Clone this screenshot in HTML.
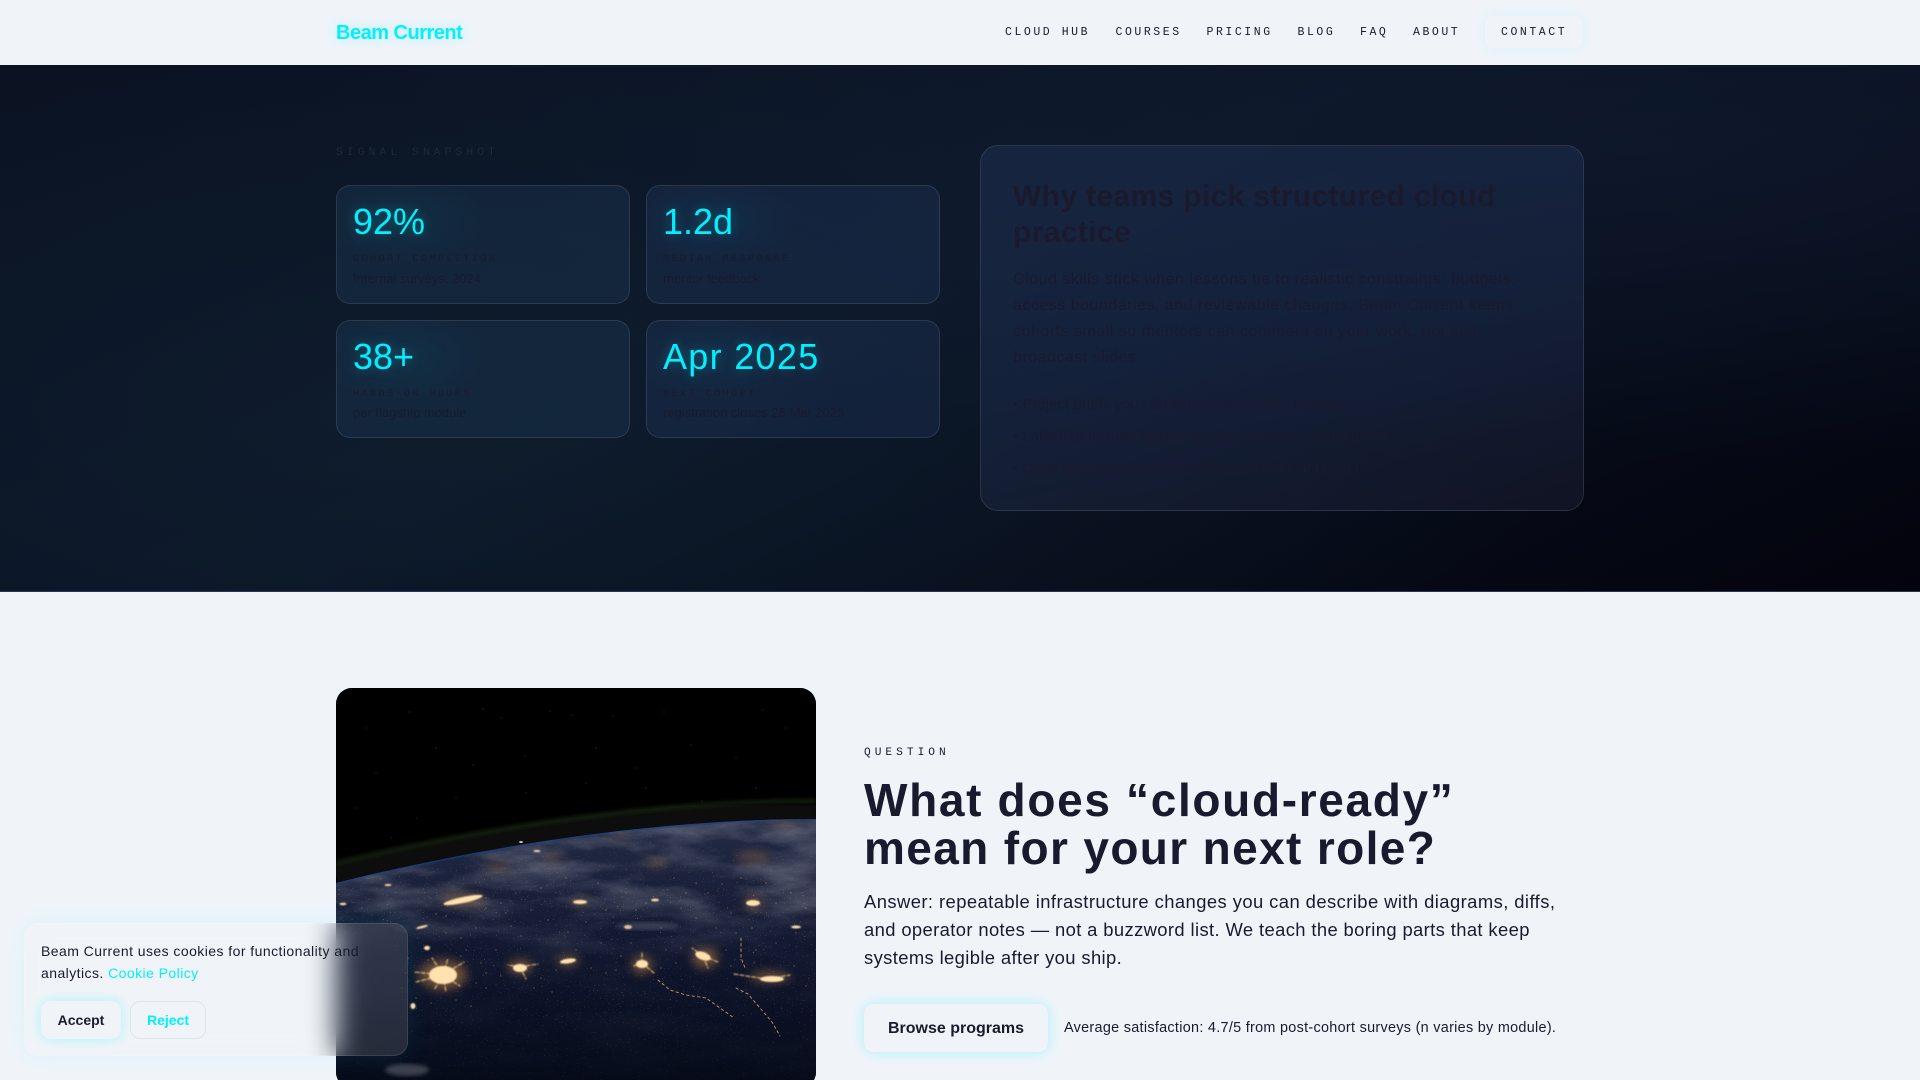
<!DOCTYPE html>
<html lang="en"><head><meta charset="utf-8"><title>Beam Current</title>
<style>
*{box-sizing:border-box;margin:0;padding:0}
html,body{width:1920px;height:1080px;overflow:hidden;background:#f0f4f9}
body{position:relative;font-family:"Liberation Sans",sans-serif;color:#1a1a2e}
.a{position:absolute;white-space:nowrap}
.m{font-family:"Liberation Mono",monospace}
nav{position:absolute;left:0;top:0;width:1920px;height:65px;background:#f0f4f9}
.logo{left:336px;top:20px;font-size:20px;line-height:26px;font-weight:700;color:#00f0ff;text-shadow:0 0 14px rgba(0,240,255,.3);letter-spacing:-.5px}
.nl{top:25px;font-size:11.5px;line-height:16px;letter-spacing:2.55px;color:#1a1a2e}
.ct{left:1485px;top:16px;width:98px;height:32px;border-radius:8px;background:#f0f4f9;box-shadow:0 0 14px rgba(0,240,255,.12)}
.hero{position:absolute;left:0;top:65px;width:1920px;height:527px;border-bottom:1px solid #2a3350;background:radial-gradient(ellipse 60% 90% at 22% 65%,rgba(17,36,52,.5),transparent),radial-gradient(ellipse 70% 60% at 85% 15%,rgba(18,30,52,.55),transparent),linear-gradient(155deg,#0a1020 0%,#0b1526 45%,#03030d 100%)}
.card{position:absolute;width:294px;border:1px solid rgba(255,255,255,.1);border-radius:14px;background:rgba(32,66,100,.3);overflow:hidden}
.card:after{content:"";position:absolute;left:-20px;top:-10px;width:170px;height:90px;background:radial-gradient(ellipse at center,rgba(0,200,240,.06),transparent 70%)}
.num{position:absolute;left:16px;top:14px;font-size:36px;line-height:44px;color:#00f0ff;text-shadow:0 0 12px rgba(0,240,255,.3);z-index:1;white-space:nowrap}
.lab{position:absolute;left:16px;top:66px;font-family:"Liberation Mono",monospace;font-size:10.4px;line-height:14px;letter-spacing:2.25px;color:#1a1a2e;z-index:1;white-space:nowrap}
.sub{position:absolute;left:16px;top:84px;font-size:13px;line-height:18px;color:#1a1a2e;z-index:1;white-space:nowrap}
.panel{position:absolute;left:980px;top:145px;width:604px;height:366px;border:1px solid rgba(255,255,255,.1);border-radius:18px;background:linear-gradient(170deg,rgba(32,48,84,.5),rgba(32,48,84,.44) 55%,rgba(38,40,62,.36))}
.pl{left:1013px;font-size:16px;line-height:26px;color:#1a1a2e;letter-spacing:.5px}
.li{left:1013px;font-size:14.4px;line-height:24px;color:#1a1a2e;letter-spacing:.27px}
.h2p{left:1013px;font-size:30px;line-height:36px;font-weight:700;color:#1a1a2e;letter-spacing:.35px}
.imgw{position:absolute;left:336px;top:688px;width:480px;height:400px;border-radius:16px;overflow:hidden;background:#000}
.cookie{position:absolute;left:24px;top:923px;width:384px;height:133px;border-radius:14px;border:1px solid rgba(255,255,255,.1);background:rgba(240,244,249,.13);-webkit-backdrop-filter:blur(14px);backdrop-filter:blur(14px);box-shadow:0 0 26px rgba(0,240,255,.1)}
.ck{left:41px;font-size:14px;line-height:22px;color:#1a1a2e;letter-spacing:.44px}
.btn{position:absolute;text-align:center;border-radius:10px}
</style></head><body>

<nav>
<div class="a logo">Beam Current</div>
<div class="a m nl" style="left:1005px">CLOUD HUB</div>
<div class="a m nl" style="left:1115.5px">COURSES</div>
<div class="a m nl" style="left:1206.5px">PRICING</div>
<div class="a m nl" style="left:1297.5px">BLOG</div>
<div class="a m nl" style="left:1360px">FAQ</div>
<div class="a m nl" style="left:1413px">ABOUT</div>
<div class="a ct"></div>
<div class="a m nl" style="left:1501px">CONTACT</div>
</nav>

<section class="hero"></section>
<div class="a m" style="left:336px;top:146px;font-size:11.2px;line-height:15px;letter-spacing:4.15px;color:#1b2a3a">SIGNAL SNAPSHOT</div>

<div class="card" style="left:336px;top:185px;height:119px"><div class="num">92%</div><div class="lab">COHORT COMPLETION</div><div class="sub">Internal surveys, 2024</div></div>
<div class="card" style="left:646px;top:185px;height:119px;background:rgba(34,56,96,.34)"><div class="num">1.2d</div><div class="lab">MEDIAN RESPONSE</div><div class="sub">mentor feedback</div></div>
<div class="card" style="left:336px;top:320px;height:118px"><div class="num">38+</div><div class="lab">HANDS-ON HOURS</div><div class="sub" style="top:83px">per flagship module</div></div>
<div class="card" style="left:646px;top:320px;height:118px;background:rgba(34,56,96,.34)"><div class="num" style="letter-spacing:1.3px">Apr 2025</div><div class="lab">NEXT COHORT</div><div class="sub" style="top:83px">registration closes 28 Mar 2025</div></div>

<div class="panel"></div>
<div class="a h2p" style="top:179px">Why teams pick structured cloud</div>
<div class="a h2p" style="top:215px">practice</div>
<div class="a pl" style="top:267px">Cloud skills stick when lessons tie to realistic constraints: budgets,</div>
<div class="a pl" style="top:293px">access boundaries, and reviewable changes. Beam Current keeps</div>
<div class="a pl" style="top:319px">cohorts small so mentors can comment on your work, not just</div>
<div class="a pl" style="top:345px">broadcast slides.</div>
<div class="a li" style="top:393px">• Project briefs you can explain to a hiring manager</div>
<div class="a li" style="top:425px">• Labs that include failure injection, not only happy paths</div>
<div class="a li" style="top:457px">• Clear statements about what tuition does not cover</div>

<div class="imgw">
<svg width="480" height="400" viewBox="0 0 480 400" xmlns="http://www.w3.org/2000/svg">
<defs>
<clipPath id="e"><path d="M0 195C120 165 300 131 480 131V400H0Z"/></clipPath>
<linearGradient id="eg" x1="0" y1="130" x2="0" y2="400" gradientUnits="userSpaceOnUse"><stop offset="0" stop-color="#232c46"/><stop offset=".25" stop-color="#1a213a"/><stop offset=".55" stop-color="#0e152c"/><stop offset="1" stop-color="#060a18"/></linearGradient>
<linearGradient id="cm" x1="0" y1="130" x2="0" y2="400" gradientUnits="userSpaceOnUse"><stop offset="0" stop-color="#aaa"/><stop offset=".32" stop-color="#888"/><stop offset=".52" stop-color="#141414"/><stop offset="1" stop-color="#080808"/></linearGradient>
<linearGradient id="sm" x1="0" y1="130" x2="0" y2="400" gradientUnits="userSpaceOnUse"><stop offset="0" stop-color="#222"/><stop offset=".3" stop-color="#999"/><stop offset=".7" stop-color="#666"/><stop offset="1" stop-color="#181818"/></linearGradient>
<mask id="cmask"><rect width="480" height="400" fill="url(#cm)"/></mask>
<mask id="smask"><rect width="480" height="400" fill="url(#sm)"/></mask>
<filter id="cl" x="0" y="0" width="100%" height="100%"><feTurbulence type="fractalNoise" baseFrequency=".012 .04" numOctaves="5" seed="7"/><feColorMatrix values="0 0 0 0 .44 0 0 0 0 .44 0 0 0 0 .5 1.9 0 0 0 -.72"/></filter>
<filter id="sp" x="0" y="0" width="100%" height="100%"><feTurbulence type="fractalNoise" baseFrequency=".7" numOctaves="2" seed="11"/><feColorMatrix values="0 0 0 0 1 0 0 0 0 .66 0 0 0 0 .3 14 0 0 0 -10.3"/></filter>
<filter id="b2"><feGaussianBlur stdDeviation="2"/></filter>
<filter id="b5"><feGaussianBlur stdDeviation="5"/></filter>
<filter id="b1"><feGaussianBlur stdDeviation=".9"/></filter>
</defs>
<rect width="480" height="400" fill="#000"/>
<path d="M0 188C120 158 300 124 480 124" fill="none" stroke="#0c1108" stroke-width="24" filter="url(#b2)"/>
<path d="M0 175C120 146 300 113 480 113" fill="none" stroke="#18240e" stroke-width="4" filter="url(#b2)"/>
<g clip-path="url(#e)">
<rect width="480" height="400" fill="url(#eg)"/>
<g mask="url(#cmask)"><rect width="480" height="400" filter="url(#cl)" opacity=".75"/></g>
<g mask="url(#smask)"><rect y="130" width="480" height="270" filter="url(#sp)" opacity=".7"/></g>
<path d="M0 195C120 165 300 131 480 131" fill="none" stroke="#173f8c" stroke-width="2.5" filter="url(#b1)" opacity=".8"/>
<g fill="#ffa850" filter="url(#b5)" opacity=".4">
<ellipse cx="107" cy="287" rx="24" ry="15"/><ellipse cx="127" cy="212" rx="22" ry="5"/><ellipse cx="184" cy="279" rx="12" ry="7"/><ellipse cx="232" cy="273" rx="11" ry="5"/><ellipse cx="306" cy="277" rx="10" ry="9"/><ellipse cx="369" cy="270" rx="13" ry="10"/><ellipse cx="417" cy="215" rx="9" ry="5"/><ellipse cx="434" cy="289" rx="20" ry="5"/><ellipse cx="244" cy="214" rx="8" ry="3"/>
<ellipse cx="417" cy="169" rx="18" ry="5" opacity=".7"/><ellipse cx="447" cy="135" rx="18" ry="3" opacity=".6"/><ellipse cx="162" cy="179" rx="12" ry="4" opacity=".7"/><ellipse cx="217" cy="170" rx="10" ry="3" opacity=".7"/><ellipse cx="321" cy="175" rx="10" ry="5" opacity=".6"/><ellipse cx="281" cy="147" rx="10" ry="3" opacity=".6"/>
</g>
<g filter="url(#b1)">
<g fill="none" stroke="#ffcf85" stroke-width="1" stroke-linecap="round" stroke-dasharray="4 2">
<path d="M107 287L80 294M107 287L78 284M107 287L96 270M107 287L112 270M107 287L128 274M107 287L124 298M107 287L110 304M107 287L98 302"/>
<path d="M184 279L172 277M184 279L190 291M184 279L202 276"/>
<path d="M306 275L306 264M306 275L298 278M306 275L318 285"/>
<path d="M367 268L356 260M367 268L382 274M367 268L372 280"/>
<path d="M398 286L430 291 454 287"/>
</g>
<g fill="#ffe2ad">
<ellipse cx="107" cy="287" rx="14" ry="9"/><ellipse cx="127" cy="212" rx="20" ry="3" transform="rotate(-12 127 212)"/><ellipse cx="184" cy="280" rx="7" ry="4"/><ellipse cx="232" cy="273" rx="8" ry="2.4" transform="rotate(-8 232 273)"/><ellipse cx="306" cy="276" rx="6" ry="4"/><ellipse cx="367" cy="268" rx="8" ry="4" transform="rotate(20 367 268)"/><ellipse cx="436" cy="291" rx="12" ry="3"/><ellipse cx="417" cy="215" rx="7" ry="3"/><ellipse cx="244" cy="214" rx="7" ry="2"/>
<ellipse cx="91" cy="260" rx="3" ry="2.2"/><ellipse cx="77" cy="318" rx="2.5" ry="3"/><ellipse cx="86" cy="239" rx="6" ry="1.2" transform="rotate(-15 86 239)"/><ellipse cx="292" cy="239" rx="4" ry="2"/><ellipse cx="319" cy="212" rx="4" ry="1.4"/><ellipse cx="201" cy="163" rx="3.5" ry="1"/><ellipse cx="52" cy="197" rx="3.5" ry="1"/><ellipse cx="7" cy="216" rx="3.5" ry="1.2"/><ellipse cx="460" cy="239" rx="5" ry="1.5"/>
</g>
</g>
<path fill="none" stroke="#f0a850" stroke-width="1" stroke-linecap="round" opacity=".9" d="M150 220h.01M170 225h.01M175 238h.01M185 248h.01M195 222h.01M212 232h.01M232 244h.01M250 234h.01M240 262h.01M265 255h.01M285 268h.01M295 255h.01M325 240h.01M330 262h.01M345 220h.01M360 230h.01M372 205h.01M380 240h.01M400 245h.01M405 262h.01M416 240h.01M420 262h.01M440 255h.01M460 245h.01M470 220h.01M455 205h.01M430 195h.01M405 190h.01M386 196h.01M360 195h.01M338 190h.01M310 215h.01M290 205h.01M262 195h.01M230 190h.01M205 200h.01M180 205h.01M140 240h.01M125 250h.01M110 245h.01M60 258h.01M72 270h.01M130 262h.01M145 275h.01M160 262h.01M150 300h.01M135 318h.01M270 285h.01M198 300h.01M216 304h.01M70 285h.01M66 300h.01M80 310h.01M95 315h.01M120 312h.01M140 295h.01M150 285h.01M92 272h.01M125 268h.01M165 288h.01M205 290h.01M220 282h.01M255 280h.01M280 282h.01M325 280h.01M340 275h.01M345 260h.01M390 262h.01M395 278h.01M418 275h.01M458 278h.01M470 298h.01M110 228h.01M100 226h.01M165 215h.01M150 210h.01M270 222h.01M300 222h.01M350 205h.01M395 225h.01M440 215h.01"/>
<path fill="none" stroke="#ffc070" stroke-width=".9" stroke-dasharray="2.5 3" stroke-linecap="round" opacity=".75" d="M322 292l12 10 16 5 20 3 14 10 14 10M400 300l12 6 12 14 12 14 8 14M405 250v20l5 12"/>
<ellipse cx="71" cy="382" rx="22" ry="6" fill="#8a8c98" opacity=".4" filter="url(#b2)"/>
<ellipse cx="312" cy="238" rx="32" ry="4" fill="#7d7f8e" opacity=".35" filter="url(#b2)"/>
</g>
<path fill="none" stroke="#fff" stroke-width=".8" stroke-linecap="round" opacity=".5" d="M236 27h.01M277 28h.01M427 22h.01M355 57h.01M189 68h.01M147 21h.01M73 24h.01M328 24h.01M214 23h.01M81 130h.01M40 85h.01M137 77h.01M366 113h.01M165 30h.01M100 60h.01M260 60h.01M300 80h.01M400 70h.01M450 40h.01M250 95h.01M190 105h.01M20 120h.01M55 150h.01M310 100h.01M420 100h.01M120 110h.01M30 40h.01"/>
<path fill="none" stroke="#fff" stroke-width="1.6" stroke-linecap="round" d="M184 154h2"/>
</svg>
</div>

<div class="a m" style="left:864px;top:746px;font-size:11.2px;line-height:15px;letter-spacing:4px;color:#1a1a2e">QUESTION</div>
<div class="a" style="left:864px;top:776px;font-size:46px;line-height:48px;font-weight:700;color:#1a1a2e;letter-spacing:1.67px">What does “cloud-ready”</div>
<div class="a" style="left:864px;top:824px;font-size:46px;line-height:48px;font-weight:700;color:#1a1a2e;letter-spacing:1.37px">mean for your next role?</div>
<div class="a" style="left:864px;top:888px;font-size:18.4px;line-height:28px;letter-spacing:.43px">Answer: repeatable infrastructure changes you can describe with diagrams, diffs,</div>
<div class="a" style="left:864px;top:916px;font-size:18.4px;line-height:28px;letter-spacing:.38px">and operator notes — not a buzzword list. We teach the boring parts that keep</div>
<div class="a" style="left:864px;top:944px;font-size:18.4px;line-height:28px;letter-spacing:.38px">systems legible after you ship.</div>
<div class="btn" style="left:864px;top:1004px;width:184px;height:48px;line-height:50px;font-size:16px;font-weight:700;background:#f0f4f9;box-shadow:0 0 14px rgba(0,240,255,.3)">Browse programs</div>
<div class="a" style="left:1064px;top:1019px;font-size:14.4px;line-height:18px;letter-spacing:.3px">Average satisfaction: 4.7/5 from post-cohort surveys (n varies by module).</div>

<div class="cookie"></div>
<div class="a ck" style="top:940px">Beam Current uses cookies for functionality and</div>
<div class="a ck" style="top:962px">analytics. <span style="color:#00f0ff">Cookie Policy</span></div>
<div class="btn" style="left:41px;top:1001px;width:80px;height:38px;line-height:38px;font-size:14px;font-weight:700;background:#f0f4f9;box-shadow:0 0 12px rgba(0,240,255,.3)">Accept</div>
<div class="btn" style="left:130px;top:1001px;width:76px;height:38px;line-height:36px;font-size:14px;font-weight:700;color:#00f0ff;border:1px solid rgba(26,26,46,.07)">Reject</div>
</body></html>
